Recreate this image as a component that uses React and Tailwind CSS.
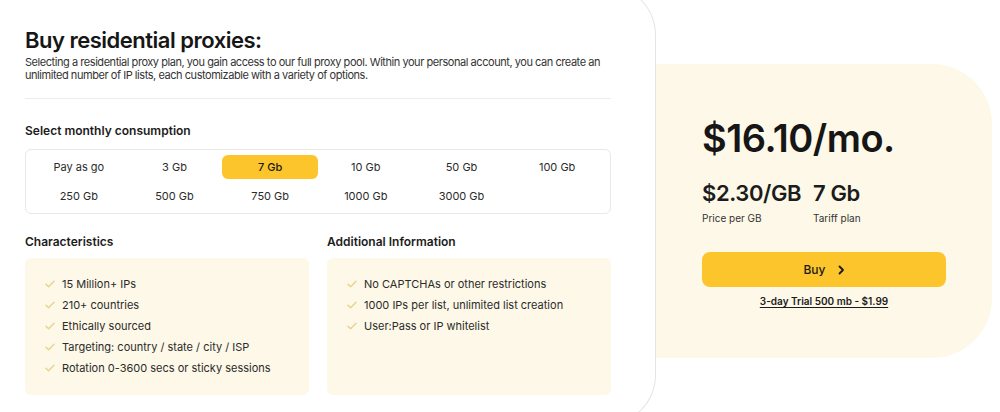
import { useState } from 'react';

const PLANS = ['Pay as go', '3 Gb', '7 Gb', '10 Gb', '50 Gb', '100 Gb', '250 Gb', '500 Gb', '750 Gb', '1000 Gb', '3000 Gb'];

const CHARACTERISTICS = [
  '15 Million+ IPs',
  '210+ countries',
  'Ethically sourced',
  'Targeting: country / state / city / ISP',
  'Rotation 0-3600 secs or sticky sessions',
];

const ADDITIONAL = [
  'No CAPTCHAs or other restrictions',
  '1000 IPs per list, unlimited list creation',
  'User:Pass or IP whitelist',
];

function Check() {
  return (
    <svg width="10" height="8" viewBox="0 0 10 8" fill="none" className="shrink-0">
      <path d="M1 4.3 L3.6 6.8 L9 1.2" stroke="#e6d48c" strokeWidth="1.4" strokeLinecap="round" strokeLinejoin="round" />
    </svg>
  );
}

function FeatureList({ title, items }) {
  return (
    <div>
      <h3 className="text-[12px] leading-[16px] font-semibold text-[#1c1c1c]">{title}</h3>
      <ul className="mt-[8px] h-[137px] rounded-[6px] bg-[#fdf8e7] pl-[20px] pt-[19px] flex flex-col gap-[7px]">
        {items.map(t => (
          <li key={t} className="flex items-center gap-[7px] text-[11px] leading-[14px] text-[#2b2b2b]">
            <Check />
            <span>{t}</span>
          </li>
        ))}
      </ul>
    </div>
  );
}

export default function App() {
  const [plan, setPlan] = useState('7 Gb');

  return (
    <div className="flex h-[412px] w-[1000px] overflow-hidden bg-white text-[#1c1c1c]" style={{ fontFamily: 'Inter, "Noto Sans", sans-serif' }}>
      {/* left card */}
      <div className="relative z-10 -mt-[15px] h-[440px] w-[656px] shrink-0 rounded-r-[50px] border border-l-0 border-[#e4e4e4] bg-white pl-[25px] pr-[44px] pt-[41px]">
        <h1 className="text-[22px] leading-[26px] font-semibold tracking-[-0.5px] text-[#161616]">Buy residential proxies:</h1>
        <p className="mt-[3px] text-[11px] leading-[13px] tracking-[-0.45px] text-[#333]">
          Selecting a residential proxy plan, you gain access to our full proxy pool. Within your personal account, you can create an unlimited number of IP lists, each customizable with a variety of options.
        </p>
        <div className="mt-[16px] border-t border-[#ececec]" />

        <h2 className="mt-[24px] text-[12px] leading-[16px] font-semibold">Select monthly consumption</h2>
        <div className="mt-[10px] grid h-[65px] grid-cols-6 gap-y-[5px] rounded-[6px] border border-[#e8e8e8] px-[5px] py-[5px]">
          {PLANS.map(p => (
            <button
              key={p}
              onClick={() => setPlan(p)}
              className={`h-[24px] rounded-[6px] text-[11px] ${p === plan ? 'bg-[#fcc52b] font-medium text-[#1a1a1a]' : 'text-[#2b2b2b]'}`}
            >
              {p}
            </button>
          ))}
        </div>

        <div className="mt-[20px] grid grid-cols-2 gap-[18px]">
          <FeatureList title="Characteristics" items={CHARACTERISTICS} />
          <FeatureList title="Additional Information" items={ADDITIONAL} />
        </div>
      </div>

      {/* price panel */}
      <div className="mt-[64px] h-[294px] w-[336px] shrink-0 rounded-r-[60px] bg-[#fdf8e7] pl-[46px] pt-[52px]">
        <div className="text-[38px] leading-[44px] font-semibold tracking-[-0.5px] text-[#161616]">$16.10/mo.</div>
        <div className="mt-[20px] flex">
          <div className="w-[111px]">
            <div className="text-[22px] leading-[26px] font-semibold tracking-[-0.4px]">$2.30/GB</div>
            <div className="mt-[5px] text-[10px] leading-[14px] text-[#333]">Price per GB</div>
          </div>
          <div>
            <div className="text-[22px] leading-[26px] font-semibold tracking-[-0.4px]">7 Gb</div>
            <div className="mt-[5px] text-[10px] leading-[14px] text-[#333]">Tariff plan</div>
          </div>
        </div>
        <button className="mt-[27px] flex h-[35px] w-[244px] items-center justify-center gap-[12px] rounded-[8px] bg-[#fcc52b] text-[12px] font-medium text-[#1a1a1a]">
          Buy
          <svg width="7" height="10" viewBox="0 0 7 10" fill="none">
            <path d="M1.5 1.5 L5 5 L1.5 8.5" stroke="#1a1a1a" strokeWidth="1.8" strokeLinecap="round" strokeLinejoin="round" />
          </svg>
        </button>
        <div className="mt-[7px] w-[244px] text-center text-[10px] leading-[14px] font-semibold">
          <a href="#" className="underline underline-offset-2">3-day Trial 500 mb - $1.99</a>
        </div>
      </div>
    </div>
  );
}
